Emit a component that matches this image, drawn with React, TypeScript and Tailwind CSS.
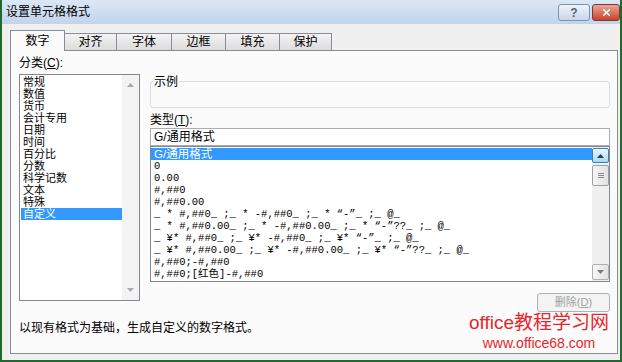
import { X } from "lucide-react";

const CATEGORIES = [
  "常规",
  "数值",
  "货币",
  "会计专用",
  "日期",
  "时间",
  "百分比",
  "分数",
  "科学记数",
  "文本",
  "特殊",
  "自定义",
];

const FORMATS = [
  "G/通用格式",
  "0",
  "0.00",
  "#,##0",
  "#,##0.00",
  "_ * #,##0_ ;_ * -#,##0_ ;_ * “-”_ ;_ @_",
  "_ * #,##0.00_ ;_ * -#,##0.00_ ;_ * “-”??_ ;_ @_",
  "_ ¥* #,##0_ ;_ ¥* -#,##0_ ;_ ¥* “-”_ ;_ @_",
  "_ ¥* #,##0.00_ ;_ ¥* -#,##0.00_ ;_ ¥* “-”??_ ;_ @_",
  "#,##0;-#,##0",
  "#,##0;[红色]-#,##0",
];

const TABS = [
  { label: "数字", width: "w-[55px]", active: true },
  { label: "对齐", width: "w-[52px]", active: false },
  { label: "字体", width: "w-[55px]", active: false },
  { label: "边框", width: "w-[54px]", active: false },
  { label: "填充", width: "w-[54px]", active: false },
  { label: "保护", width: "w-[52px]", active: false },
];

function Arrow({ up, color }: { up?: boolean; color: string }) {
  return (
    <svg width="7" height="4" viewBox="0 0 7 4">
      <path d={up ? "M0 4 L3.5 0 L7 4 Z" : "M0 0 L3.5 4 L7 0 Z"} fill={color} />
    </svg>
  );
}

export default function App() {
  return (
    <div className="flex h-[362px] w-[622px] flex-col overflow-hidden border-x-2 border-b-2 border-[#1f6b2c] bg-[#f0f0f0] font-['Liberation_Sans','Noto_Sans_CJK_SC',sans-serif] text-[12px] text-black">
      {/* title bar */}
      <div className="flex h-[24px] items-center justify-between bg-linear-to-b from-[#dbe7f5] to-[#c2d4ea] pl-[4px]">
        <span className="leading-none">设置单元格格式</span>
        <div className="flex gap-[2px] self-start pt-[4px]">
          <div className="flex h-[17px] w-[32px] items-center justify-center rounded-[3px] border border-[#7f93b0] bg-linear-to-b from-[#eef3fa] to-[#c9d7ea] text-[12px] font-bold leading-none text-[#56657c]">
            ?
          </div>
          <div className="flex h-[17px] w-[28px] items-center justify-center rounded-[3px] border border-[#7b3a30] bg-linear-to-b from-[#e9a598] to-[#c5402c]">
            <X size={11} strokeWidth={3.5} color="#ffffff" />
          </div>
        </div>
      </div>

      {/* tabs */}
      <div className="flex h-[26px] items-end pl-[8px]">
        {TABS.map((t) =>
          t.active ? (
            <div
              key={t.label}
              className={`relative z-10 -mb-px flex h-[21px] items-center justify-center border border-b-0 border-[#898c95] bg-[#fbfbfb] pb-[1px] ${t.width}`}
            >
              {t.label}
            </div>
          ) : (
            <div
              key={t.label}
              className={`flex h-[17px] items-center justify-center border-t border-r border-[#898c95] bg-linear-to-b from-[#f3f3f3] to-[#dcdcdc] ${t.width}`}
            >
              {t.label}
            </div>
          ),
        )}
      </div>

      {/* tab page */}
      <div className="relative ml-[8px] h-[304px] w-[608px] border border-[#898c95] bg-[#fbfbfb]">
        <div className="flex gap-[10px] pl-[8px] pr-[6px]">
          {/* category column */}
          <div className="flex w-[121px] flex-col pt-[6px]">
            <div className="h-[12px] leading-[12px]">
              分类(<span className="underline">C</span>):
            </div>
            <div className="mt-[5px] flex h-[227px] border border-[#828790] bg-white">
              <div className="flex-1 pt-[1px] pl-[1px]">
                {CATEGORIES.map((c) => (
                  <div
                    key={c}
                    className={`flex h-[12px] items-center overflow-hidden pl-[2px] text-[11px] leading-[11px] ${c === "自定义" ? "bg-[#3399ff] text-white" : ""}`}
                  >
                    {c}
                  </div>
                ))}
              </div>
              <div className="flex w-[17px] flex-col items-center justify-between bg-[#f3f3f3] py-[8px]">
                <Arrow up color="#a9a9a9" />
                <Arrow color="#a9a9a9" />
              </div>
            </div>
          </div>

          {/* format column */}
          <div className="flex w-[460px] flex-col">
            <div className="relative mt-[30px] h-[27px] rounded-[3px] border border-[#d5dfe5]">
              <span className="absolute -top-[6px] left-[2px] bg-[#fbfbfb] px-[1px] leading-[12px]">示例</span>
            </div>
            <div className="mt-[6px] h-[12px] leading-[12px]">
              类型(<span className="underline">T</span>):
            </div>
            <div className="mt-[2px] flex h-[18px] items-center border border-[#abadb3] bg-white pl-[3px]">
              G/通用格式
            </div>
            <div className="flex h-[136px] border border-[#828790] bg-white">
              <div className="flex-1 pt-[1px]">
                {FORMATS.map((f, i) => (
                  <div
                    key={f}
                    className={`h-[12px] overflow-hidden whitespace-pre pl-[3px] leading-[12px] ${i === 0 ? "bg-[#3399ff] text-[11.5px] text-white" : "font-['Liberation_Mono','Noto_Sans_CJK_SC',monospace] text-[10.5px]"}`}
                  >
                    {f}
                  </div>
                ))}
              </div>
              <div className="flex w-[17px] flex-col bg-[#f0f0f0] py-[1px]">
                <div className="flex h-[15px] items-center justify-center rounded-[2px] border border-[#3c7fb1] bg-linear-to-b from-[#eaf6fd] to-[#a7d9f5]">
                  <Arrow up color="#1d3e5e" />
                </div>
                <div className="mt-[2px] flex h-[21px] flex-col items-center justify-center gap-[1px] rounded-[2px] border border-[#a0a0a0] bg-linear-to-r from-[#f5f5f5] to-[#e2e2e2]">
                  <div className="h-px w-[6px] bg-[#8a8a8a]" />
                  <div className="h-px w-[6px] bg-[#8a8a8a]" />
                  <div className="h-px w-[6px] bg-[#8a8a8a]" />
                </div>
                <div className="flex-1" />
                <div className="flex h-[16px] items-center justify-center rounded-[2px] border border-[#b0b0b0] bg-linear-to-r from-[#f7f7f7] to-[#e3e3e3]">
                  <Arrow color="#7a7a7a" />
                </div>
              </div>
            </div>
            <div className="mt-[11px] flex justify-end">
              <div className="flex h-[19px] w-[73px] items-center justify-center rounded-[3px] border border-[#adb2b5] bg-[#f4f4f4] text-[11px] text-[#a0a0a0]">
                删除(<span className="underline">D</span>)
              </div>
            </div>
          </div>
        </div>

        <div className="mt-[10px] pl-[8px] leading-[12px]">以现有格式为基础，生成自定义的数字格式。</div>

        {/* site watermark */}
        <div className="absolute right-[8px] top-[261px] flex flex-col items-center text-[#e8262b]">
          <span className="text-[19px] leading-[22px]">office教程学习网</span>
          <span className="mt-[1px] text-[14px] leading-[16px]">www.office68.com</span>
        </div>
      </div>
    </div>
  );
}
